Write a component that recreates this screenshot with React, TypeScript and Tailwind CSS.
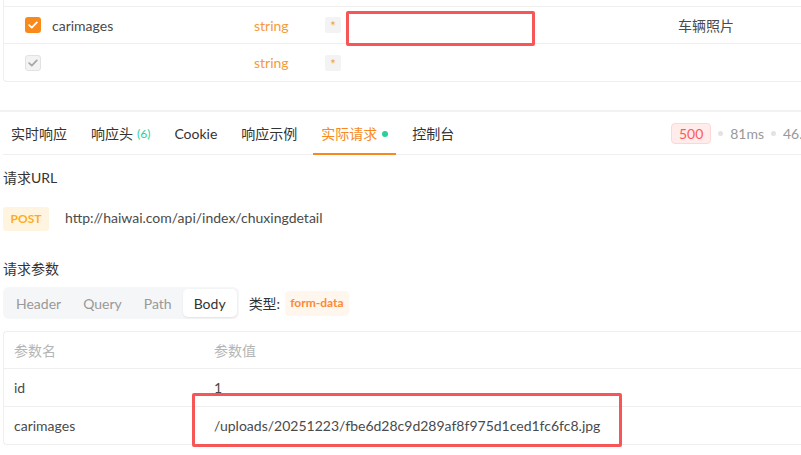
import React from 'react';

const tabs = [
  { label: '实时响应' },
  { label: '响应头', count: '(6)' },
  { label: 'Cookie' },
  { label: '响应示例' },
  { label: '实际请求', active: true },
  { label: '控制台' },
];

const CheckIcon = ({ color }: { color: string }) => (
  <svg width="10" height="8" viewBox="0 0 10 8" fill="none">
    <path d="M1.2 4.2 3.8 6.6 8.8 1.4" stroke={color} strokeWidth="1.8" strokeLinecap="round" strokeLinejoin="round" />
  </svg>
);

const Dot = () => <span className="w-[5px] h-[5px] rounded-full bg-[#e3e3e3] inline-block" />;

export default function App() {
  return (
    <div className="relative w-[801px] h-[455px] overflow-hidden bg-white text-[14px] text-[#333] font-['Lato','Noto_Sans_CJK_SC',sans-serif]">
      {/* 参数表格（上半部分） */}
      <div className="ml-[3px] border-l border-b border-[#efefef] rounded-bl-[4px]">
        <div className="h-[7px] border-b border-[#efefef]" />
        <div className="h-[37px] flex items-center border-b border-[#efefef]">
          <div className="w-[21px]" />
          <span className="w-4 h-4 rounded-[3px] bg-[#f8891c] flex items-center justify-center">
            <CheckIcon color="#fff" />
          </span>
          <span className="ml-[11px] w-[202px] text-[#4a4a4a]">carimages</span>
          <span className="w-[71px] text-[#f59a3a]">string</span>
          <span className="w-4 h-4 rounded-[2px] bg-[#f3f3f3] text-[#f59a3a] text-[13px] leading-none flex items-center justify-center pt-[3px]">*</span>
          <span className="ml-[337px] text-[#4a4a4a]">车辆照片</span>
        </div>
        <div className="h-[37px] flex items-center">
          <div className="w-[21px]" />
          <span className="w-4 h-4 rounded-[3px] bg-[#f3f3f3] border border-[#e2e2e2] flex items-center justify-center">
            <CheckIcon color="#a9a9a9" />
          </span>
          <span className="ml-[11px] w-[202px]" />
          <span className="w-[71px] text-[#f59a3a]">string</span>
          <span className="w-4 h-4 rounded-[2px] bg-[#f3f3f3] text-[#f59a3a] text-[13px] leading-none flex items-center justify-center pt-[3px]">*</span>
        </div>
      </div>

      {/* 响应区域 */}
      <div className="mt-[28px] border-t-2 border-[#f2f2f2]">
        <div className="ml-[3px] h-[43px] flex items-stretch border-b border-[#efefef]">
          <div className="flex gap-2">
            {tabs.map(t => (
              <div
                key={t.label}
                className={`relative px-2 pt-[1px] flex items-center ${t.active ? 'text-[#f8891c]' : 'text-[#333]'}`}
              >
                <span>{t.label}</span>
                {t.count && <span className="ml-1 text-[12px] text-[#2ccf9b]">{t.count}</span>}
                {t.active && <span className="ml-[5px] w-[6px] h-[6px] rounded-full bg-[#2ccf9b]" />}
                {t.active && <span className="absolute left-0 right-0 bottom-[-1px] h-[2px] bg-[#f8891c]" />}
              </div>
            ))}
          </div>
          <div className="ml-auto mr-[-28px] shrink-0 flex items-center gap-[7px] text-[#999]">
            <span className="h-[21px] w-[40px] text-center rounded-[4px] bg-[#ffeceb] border border-[#ffd6d4] text-[#ff5a5a] leading-[19px]">500</span>
            <Dot />
            <span>81ms</span>
            <Dot />
            <span>46.2KB</span>
          </div>
        </div>

        <div className="ml-[3px]">
          <div className="mt-[13px] leading-[20px]">请求URL</div>
          <div className="mt-[19px] flex items-center">
            <span className="h-6 w-[46px] rounded-[3px] bg-[#fff4e0] text-[#ffac1c] text-[12px] font-bold flex items-center justify-center">POST</span>
            <span className="ml-4 pb-[3px] text-[#4a4a4a]">http://haiwai.com/api/index/chuxingdetail</span>
          </div>

          <div className="mt-[28px] leading-[20px]">请求参数</div>
          <div className="mt-[8px] flex items-center">
            <div className="h-8 p-[2px] rounded-[6px] bg-[#f5f6f8] flex">
              {['Header', 'Query', 'Path', 'Body'].map(s => (
                <span
                  key={s}
                  className={`px-[11px] flex items-center rounded-[5px] ${s === 'Body' ? 'bg-white text-[#333] shadow-[0_1px_2px_rgba(0,0,0,0.08)]' : 'text-[#999]'}`}
                >
                  {s}
                </span>
              ))}
            </div>
            <span className="ml-[10px] text-[#333]">类型:</span>
            <span className="ml-[5px] h-[25px] px-[5px] rounded-[4px] bg-[#fff6ee] text-[#fb8a34] text-[12px] font-bold flex items-center">form-data</span>
          </div>

          <div className="mt-3 border border-r-0 border-[#efefef] rounded-l-[4px]">
            <div className="h-[37px] flex items-center border-b border-[#efefef] text-[#b5b5b5]">
              <span className="w-[200px] pl-[10px]">参数名</span>
              <span className="pl-[10px]">参数值</span>
            </div>
            <div className="h-[38px] flex items-center border-b border-[#efefef] text-[#4a4a4a]">
              <span className="w-[200px] pl-[10px]">id</span>
              <span className="pl-[10px]">1</span>
            </div>
            <div className="h-[37px] flex items-center text-[#4a4a4a]">
              <span className="w-[200px] pl-[10px]">carimages</span>
              <span className="pl-[10px]">/uploads/20251223/fbe6d28c9d289af8f975d1ced1fc6fc8.jpg</span>
            </div>
          </div>
        </div>
      </div>

      {/* 标注框 */}
      <div className="absolute left-[346px] top-[11px] w-[189px] h-[35px] border-[3px] border-[#f65656] rounded-[2px]" />
      <div className="absolute left-[192px] top-[393px] w-[430px] h-[54px] border-[3px] border-[#f65656] rounded-[2px]" />
    </div>
  );
}
